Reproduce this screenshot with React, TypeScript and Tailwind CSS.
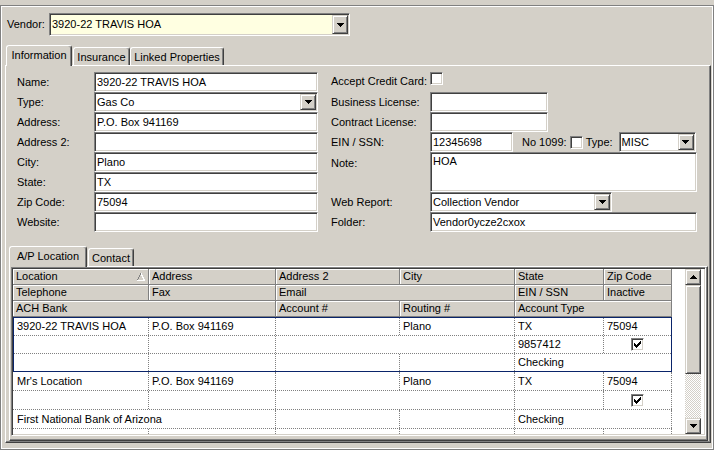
import React from "react";

const sunken =
  "border border-t-[#808080] border-l-[#808080] border-b-white border-r-white shadow-[inset_1px_1px_0_#404040,inset_-1px_-1px_0_#d4d0c8]";
const raised =
  "border border-t-[#d4d0c8] border-l-[#d4d0c8] border-b-[#404040] border-r-[#404040] shadow-[inset_1px_1px_0_#fff,inset_-1px_-1px_0_#808080]";

function DownArrow() {
  return (
    <svg width="7" height="4" shapeRendering="crispEdges">
      <rect x="0" y="0" width="7" height="1" fill="#000" />
      <rect x="1" y="1" width="5" height="1" fill="#000" />
      <rect x="2" y="2" width="3" height="1" fill="#000" />
      <rect x="3" y="3" width="1" height="1" fill="#000" />
    </svg>
  );
}
function UpArrow() {
  return (
    <svg width="7" height="4" shapeRendering="crispEdges">
      <rect x="3" y="0" width="1" height="1" fill="#000" />
      <rect x="2" y="1" width="3" height="1" fill="#000" />
      <rect x="1" y="2" width="5" height="1" fill="#000" />
      <rect x="0" y="3" width="7" height="1" fill="#000" />
    </svg>
  );
}

function TextBox({ value, className }: { value?: string; className: string }) {
  return (
    <div className={`${sunken} bg-white p-[1px] flex items-center overflow-hidden whitespace-nowrap ${className}`}>
      <span className="pl-[1px]">{value}</span>
    </div>
  );
}

function Combo({ value, className }: { value: string; className: string }) {
  return (
    <div className={`${sunken} p-[1px] flex ${className}`}>
      <div className="flex-1 flex items-center pl-[1px] overflow-hidden whitespace-nowrap">{value}</div>
      <div className={`${raised} w-[16px] bg-[#d4d0c8] flex items-center justify-center`}>
        <DownArrow />
      </div>
    </div>
  );
}

function Check({ checked }: { checked?: boolean }) {
  const px: [number, number][] = [
    [6, 0],
    [5, 1], [6, 1],
    [0, 2], [4, 2], [5, 2], [6, 2],
    [0, 3], [1, 3], [3, 3], [4, 3], [5, 3],
    [0, 4], [1, 4], [2, 4], [3, 4], [4, 4],
    [1, 5], [2, 5], [3, 5],
    [2, 6],
  ];
  return (
    <div className={`${sunken} bg-white w-[13px] h-[13px] relative shrink-0`}>
      {checked && (
        <svg width="11" height="11" className="absolute left-0 top-0" shapeRendering="crispEdges">
          {px.map(([x, y], i) => (
            <rect key={i} x={x + 2} y={y + 2} width="1" height="1" fill="#000" />
          ))}
        </svg>
      )}
    </div>
  );
}

function Tab({ label, selected, className }: { label: string; selected?: boolean; className: string }) {
  return selected ? (
    <div
      className={`relative z-10 -mb-px h-[21px] bg-[#d4d0c8] border-t border-l border-r border-t-white border-l-white border-r-[#404040] shadow-[inset_-1px_0_0_#808080] rounded-t-[3px] flex items-start pt-[3px] justify-center ${className}`}
    >
      {label}
    </div>
  ) : (
    <div
      className={`h-[18px] bg-[#d4d0c8] border-t border-l border-r border-t-white border-l-white border-r-[#404040] shadow-[inset_-1px_0_0_#808080] rounded-t-[3px] flex items-center justify-center pt-[1px] ${className}`}
    >
      {label}
    </div>
  );
}

const hcell =
  "h-[16px] bg-[#d4d0c8] border-r border-b border-r-[#808080] border-b-[#808080] shadow-[inset_1px_1px_0_#fff] flex items-center pl-[3px] overflow-hidden whitespace-nowrap";
const dcell =
  "h-full border-r border-dotted border-r-[#808080] flex items-center overflow-hidden whitespace-nowrap";
const drow = "flex border-b border-dotted border-b-[#808080]";

export default function App() {
  return (
    <div className="w-[714px] h-[450px] bg-[#d4d0c8] pt-[5px] font-['Liberation_Sans',Arial,sans-serif] text-[11px] leading-[13px] text-black overflow-hidden">
      <div className="h-[445px] border border-[#808080] shadow-[inset_1px_1px_0_#fff,inset_-1px_-1px_0_#fff] pt-[7px] pl-[4px] pr-[2px] flex flex-col">
        {/* Vendor row */}
        <div className="flex items-center h-[23px]">
          <div className="ml-[2px] w-[42px]">Vendor:</div>
          <Combo value="3920-22 TRAVIS HOA" className="w-[301px] h-[23px] bg-[#ffffe1]" />
        </div>

        {/* Main tabs */}
        <div className="flex items-end mt-[9px] h-[20px]">
          <Tab label="Information" selected className="w-[66px] ml-[1px]" />
          <Tab label="Insurance" className="w-[57px] ml-[1px]" />
          <Tab label="Linked Properties" className="w-[94px]" />
        </div>

        {/* Main page */}
        <div className="h-[378px] border border-t-white border-l-white border-r-[#404040] border-b-[#404040] shadow-[inset_-1px_-1px_0_#808080] flex flex-col pt-[6px]">
          <div className="flex h-[160px]">
            {/* Left column */}
            <div className="pl-[11px] flex flex-col">
              <div className="flex h-[20px] items-center">
                <div className="w-[77px]">Name:</div>
                <TextBox value="3920-22 TRAVIS HOA" className="w-[224px] h-[20px]" />
              </div>
              <div className="flex h-[20px] items-center">
                <div className="w-[77px]">Type:</div>
                <Combo value="Gas Co" className="w-[224px] h-[20px] bg-white" />
              </div>
              <div className="flex h-[20px] items-center">
                <div className="w-[77px]">Address:</div>
                <TextBox value="P.O. Box 941169" className="w-[224px] h-[20px]" />
              </div>
              <div className="flex h-[20px] items-center">
                <div className="w-[77px]">Address 2:</div>
                <TextBox className="w-[224px] h-[20px]" />
              </div>
              <div className="flex h-[20px] items-center">
                <div className="w-[77px]">City:</div>
                <TextBox value="Plano" className="w-[224px] h-[20px]" />
              </div>
              <div className="flex h-[20px] items-center">
                <div className="w-[77px]">State:</div>
                <TextBox value="TX" className="w-[224px] h-[20px]" />
              </div>
              <div className="flex h-[20px] items-center">
                <div className="w-[77px]">Zip Code:</div>
                <TextBox value="75094" className="w-[224px] h-[20px]" />
              </div>
              <div className="flex h-[20px] items-center">
                <div className="w-[77px]">Website:</div>
                <TextBox className="w-[224px] h-[20px]" />
              </div>
            </div>

            {/* Right column */}
            <div className="ml-[13px] flex flex-col">
              <div className="flex h-[20px] items-start">
                <div className="w-[99px] pt-[3px]">Accept Credit Card:</div>
                <Check />
              </div>
              <div className="flex h-[20px] items-center">
                <div className="w-[99px]">Business License:</div>
                <TextBox className="w-[118px] h-[20px]" />
              </div>
              <div className="flex h-[20px] items-center">
                <div className="w-[99px]">Contract License:</div>
                <TextBox className="w-[118px] h-[20px]" />
              </div>
              <div className="flex h-[20px] items-center">
                <div className="w-[99px]">EIN / SSN:</div>
                <TextBox value="12345698" className="w-[83px] h-[20px]" />
                <div className="ml-[9px]">No 1099:</div>
                <div className="ml-[3px]">
                  <Check />
                </div>
                <div className="ml-[3px]">Type:</div>
                <Combo value="MISC" className="ml-[6px] w-[77px] h-[20px] bg-white" />
              </div>
              <div className="flex h-[40px] items-center">
                <div className="w-[99px] self-start pt-[5px]">Note:</div>
                <div className={`${sunken} bg-white p-[1px] w-[267px] h-[40px] overflow-hidden`}>
                  <div className="pl-[1px] pt-[1px]">HOA</div>
                </div>
              </div>
              <div className="flex h-[20px] items-center">
                <div className="w-[99px]">Web Report:</div>
                <Combo value="Collection Vendor" className="w-[182px] h-[20px] bg-white" />
              </div>
              <div className="flex h-[20px] items-center">
                <div className="w-[99px]">Folder:</div>
                <TextBox value="Vendor0ycze2cxox" className="w-[267px] h-[20px]" />
              </div>
            </div>
          </div>

          {/* Sub tabs */}
          <div className="flex items-end mt-[14px] h-[20px] ml-[3px]">
            <Tab label="A/P Location" selected className="w-[78px]" />
            <Tab label="Contact" className="w-[46px] ml-[1px]" />
          </div>

          {/* Sub page */}
          <div className="ml-[3px] mr-[2px] h-[175px] border border-t-white border-l-white border-r-[#404040] border-b-[#404040] shadow-[inset_-1px_-1px_0_#808080] px-[1px]">
            <div className={`${sunken} h-[169px] p-[1px] flex bg-white`}>
              {/* columns */}
              <div className="w-[659px] h-full flex flex-col overflow-hidden">
                {/* header */}
                <div className="flex">
                  <div className={`${hcell} w-[136px] justify-between pr-[3px]`}>
                    <span>Location</span>
                    <svg width="8" height="8" shapeRendering="crispEdges">
                      <line x1="0.5" y1="7.5" x2="3.5" y2="0.5" stroke="#808080" />
                      <line x1="4" y1="0.5" x2="7.5" y2="7.5" stroke="#fff" />
                      <line x1="0" y1="7.5" x2="8" y2="7.5" stroke="#fff" />
                    </svg>
                  </div>
                  <div className={`${hcell} w-[127px]`}>Address</div>
                  <div className={`${hcell} w-[124px]`}>Address 2</div>
                  <div className={`${hcell} w-[115px]`}>City</div>
                  <div className={`${hcell} w-[89px]`}>State</div>
                  <div className={`${hcell} w-[68px]`}>Zip Code</div>
                </div>
                <div className="flex">
                  <div className={`${hcell} w-[136px]`}>Telephone</div>
                  <div className={`${hcell} w-[127px]`}>Fax</div>
                  <div className={`${hcell} w-[239px]`}>Email</div>
                  <div className={`${hcell} w-[89px]`}>EIN / SSN</div>
                  <div className={`${hcell} w-[68px]`}>Inactive</div>
                </div>
                <div className="flex">
                  <div className={`${hcell} w-[263px]`}>ACH Bank</div>
                  <div className={`${hcell} w-[124px]`}>Account #</div>
                  <div className={`${hcell} w-[115px]`}>Routing #</div>
                  <div className={`${hcell} w-[157px]`}>Account Type</div>
                </div>

                {/* record 1 (selected) */}
                <div className="border border-[#0a246a] flex flex-col">
                  <div className={`${drow} h-[18px]`}>
                    <div className={`${dcell} w-[135px] pl-[3px]`}>3920-22 TRAVIS HOA</div>
                    <div className={`${dcell} w-[127px] pl-[3px]`}>P.O. Box 941169</div>
                    <div className={`${dcell} w-[124px] pl-[3px]`}></div>
                    <div className={`${dcell} w-[115px] pl-[3px]`}>Plano</div>
                    <div className={`${dcell} w-[89px] pl-[3px]`}>TX</div>
                    <div className="h-full w-[67px] flex items-center pl-[3px]">75094</div>
                  </div>
                  <div className={`${drow} h-[18px]`}>
                    <div className={`${dcell} w-[135px]`}></div>
                    <div className={`${dcell} w-[127px]`}></div>
                    <div className={`${dcell} w-[239px]`}></div>
                    <div className={`${dcell} w-[89px] pl-[3px]`}>9857412</div>
                    <div className="h-full w-[67px] flex items-center justify-center">
                      <Check checked />
                    </div>
                  </div>
                  <div className="flex h-[17px]">
                    <div className={`${dcell} w-[135px]`}></div>
                    <div className={`${dcell} w-[127px]`}></div>
                    <div className={`${dcell} w-[124px]`}></div>
                    <div className={`${dcell} w-[115px]`}></div>
                    <div className="h-full w-[156px] flex items-center pl-[3px]">Checking</div>
                  </div>
                </div>

                {/* record 2 */}
                <div className={`${drow} h-[19px] shrink-0`}>
                  <div className={`${dcell} w-[136px] pl-[4px]`}>Mr&apos;s Location</div>
                  <div className={`${dcell} w-[127px] pl-[3px]`}>P.O. Box 941169</div>
                  <div className={`${dcell} w-[124px]`}></div>
                  <div className={`${dcell} w-[115px] pl-[3px]`}>Plano</div>
                  <div className={`${dcell} w-[89px] pl-[3px]`}>TX</div>
                  <div className={`${dcell} w-[68px] pl-[3px]`}>75094</div>
                </div>
                <div className={`${drow} h-[19px] shrink-0`}>
                  <div className={`${dcell} w-[136px]`}></div>
                  <div className={`${dcell} w-[127px]`}></div>
                  <div className={`${dcell} w-[239px]`}></div>
                  <div className={`${dcell} w-[89px]`}></div>
                  <div className={`${dcell} w-[68px] justify-center`}>
                    <Check checked />
                  </div>
                </div>
                <div className={`${drow} h-[19px] shrink-0`}>
                  <div className={`${dcell} w-[263px] pl-[4px]`}>First National Bank of Arizona</div>
                  <div className={`${dcell} w-[124px]`}></div>
                  <div className={`${dcell} w-[115px]`}></div>
                  <div className={`${dcell} w-[157px] pl-[3px]`}>Checking</div>
                </div>
                <div className="flex h-[19px] shrink-0">
                  <div className={`${dcell} w-[136px]`}></div>
                  <div className={`${dcell} w-[127px]`}></div>
                  <div className={`${dcell} w-[124px]`}></div>
                  <div className={`${dcell} w-[115px]`}></div>
                  <div className={`${dcell} w-[89px]`}></div>
                  <div className={`${dcell} w-[68px]`}></div>
                </div>
              </div>

              {/* filler */}
              <div className="w-[13px] h-full bg-white"></div>

              {/* scrollbar */}
              <div className="w-[16px] h-full flex flex-col">
                <div className={`${raised} h-[16px] bg-[#d4d0c8] flex items-center justify-center`}>
                  <UpArrow />
                </div>
                <div className={`${raised} h-[89px] bg-[#d4d0c8]`}></div>
                <div className="flex-1 bg-[image:repeating-conic-gradient(#d4d0c8_0_25%,#ffffff_0_50%)] bg-[length:2px_2px]"></div>
                <div className={`${raised} h-[16px] bg-[#d4d0c8] flex items-center justify-center`}>
                  <DownArrow />
                </div>
              </div>
            </div>
          </div>
        </div>
      </div>
    </div>
  );
}
